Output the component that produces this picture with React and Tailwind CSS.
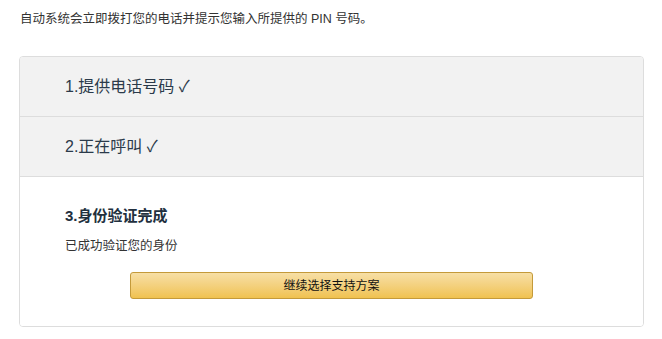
export default function App() {
  const font = { fontFamily: '"Liberation Sans", Arial, "Noto Sans CJK SC", sans-serif' };
  return (
    <div className="min-h-[339px] bg-white pt-[11px]" style={font}>
      <p className="ml-[20px] text-[12.5px] leading-[16px] text-[#333]">
        自动系统会立即拨打您的电话并提示您输入所提供的 PIN 号码。
      </p>

      <div className="ml-[19px] mt-[29px] w-[625px] overflow-hidden rounded-[4px] border border-[#ddd]">
        {/* completed steps */}
        <div className="flex h-[60px] items-center border-b border-[#ddd] bg-[#f2f2f2] pl-[45px] text-[16px] text-[#2b3a4a]">
          1.提供电话号码 ✓
        </div>
        <div className="flex h-[60px] items-center border-b border-[#ddd] bg-[#f2f2f2] pl-[45px] text-[16px] text-[#2b3a4a]">
          2.正在呼叫 ✓
        </div>

        {/* current step */}
        <div className="bg-white pb-[27px] pt-[29px]">
          <div className="pl-[45px]">
            <h2 className="text-[15px] font-bold leading-[20px] text-[#22303e]">3.身份验证完成</h2>
            <p className="mt-[12px] text-[12.5px] leading-[16px] text-[#333]">已成功验证您的身份</p>
          </div>
          <div className="mt-[18px] flex justify-center">
            <button className="h-[27px] w-[403px] rounded-[3px] border border-[#c49a3a] bg-gradient-to-b from-[#f7dfa5] to-[#f0c24f] text-[12px] text-[#111]">
              继续选择支持方案
            </button>
          </div>
        </div>
      </div>
    </div>
  );
}
